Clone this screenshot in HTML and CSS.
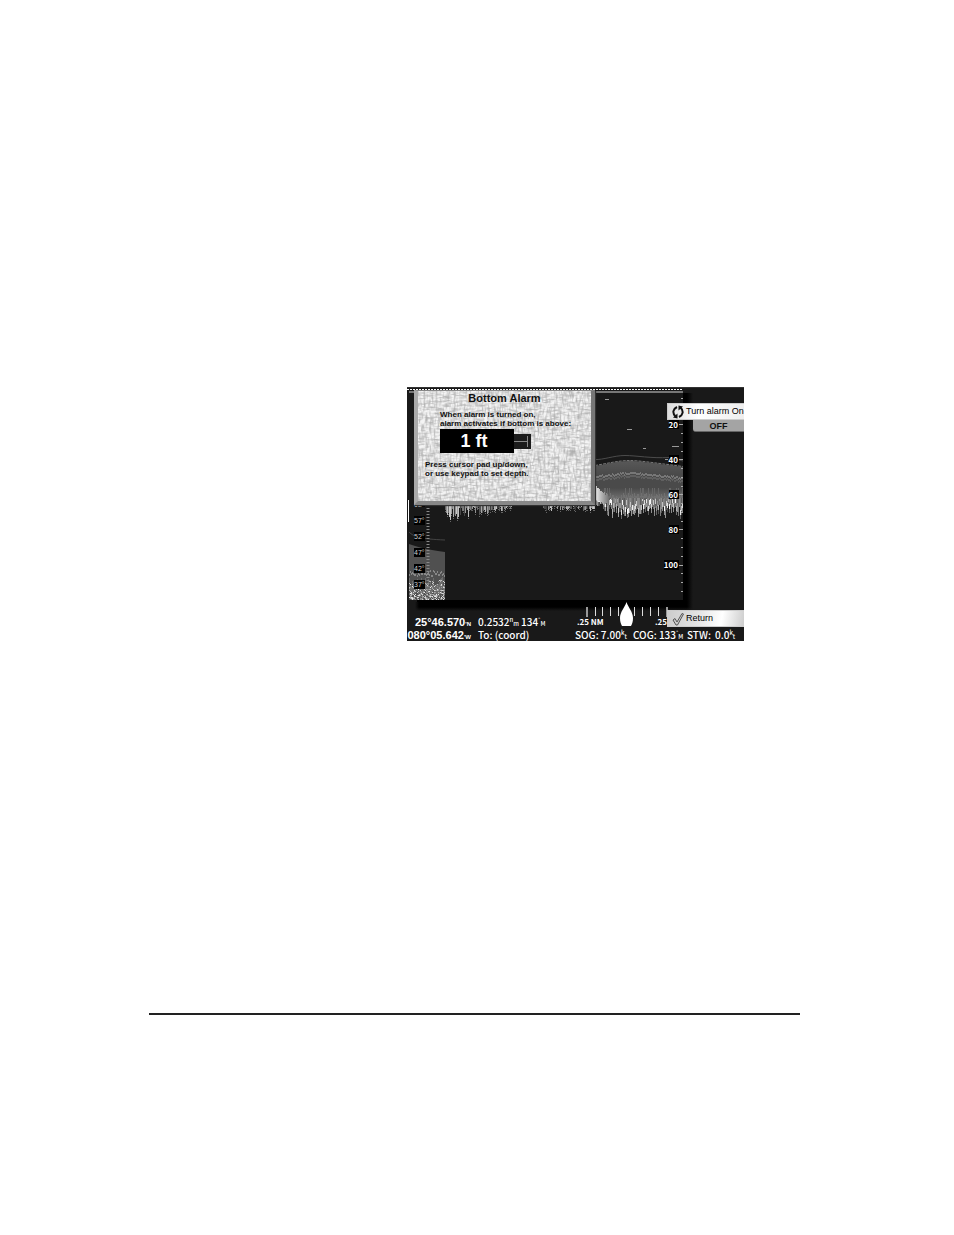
FILE: index.html
```
<!DOCTYPE html>
<html lang="en">
<head>
  <meta charset="UTF-8">
  <title>Bottom Alarm</title>
  <link rel="stylesheet" href="styles.css">
</head>
<body>

  <main class="page">
    <section class="device">
      <div class="screen">
        <svg class="sonar" viewBox="0 0 337 215" aria-hidden="true">
          <defs>
            <linearGradient id="edge" x1="0" x2="1" y1="0" y2="0">
              <stop offset="0" stop-color="#000"/>
              <stop offset="0.4" stop-color="#000"/>
              <stop offset="1" stop-color="#191919"/>
            </linearGradient>
            <linearGradient id="echo" x1="0" x2="0" y1="0" y2="1">
              <stop offset="0" stop-color="#585858"/>
              <stop offset="0.3" stop-color="#4a4a4a"/>
              <stop offset="0.6" stop-color="#4a4a4a"/>
              <stop offset="1" stop-color="#888"/>
            </linearGradient>
          </defs>
          <rect width="337" height="215" fill="#191919"/>
          <rect x="276" y="6" width="10" height="209" fill="url(#edge)"/>
          <rect x="10" y="213" width="270" height="2" fill="#000"/>
          <path d="M0 .5H337" stroke="#333"/>
          <path d="M0 2.5H276" stroke="#fff" stroke-width="1" stroke-dasharray="2 1"/>
          <path d="M2 5H276" stroke="#777" stroke-width="2"/>
          <path d="M1.5 113V135" stroke="#fff"/>

          <!-- right hand echo -->
          <path d="M188 79C200 77 212 74 222 74S245 76 276 80V119H188Z" fill="url(#echo)"/>
          <path d="M188 78.5C200 76.500 212 73.500 222 73.500S245 75.500 276 79.500" fill="none" stroke="#777" stroke-dasharray="3 1"/>
          <path d="M188 72.500C196 73 207 68.500 218 68.500S244 71.500 262 70.500L276 74" fill="none" stroke="#4c4c4c"/>
          <path d="M198 12.500H202M220 42.500H225M236 61.500H239M265 59.500H272M258 72.500H261" stroke="#999"/>

          <!-- left hand zoom strip -->
          <path d="M2 157C10 160 18 162 38 165V213H2Z" fill="#505050"/>
          <path d="M2 145C7 150 14 152 38 153" fill="none" stroke="#444"/>
          <g id="noise"></g>

          <!-- temperature scale -->
          <path d="M21 118V213" stroke="#888" stroke-width="3" stroke-dasharray="1 2"/>
          <g class="scale-box">
            <rect x="7" y="116" width="11" height="4"/>
            <rect x="7" y="129" width="11" height="9"/>
            <rect x="7" y="145" width="11" height="9"/>
            <rect x="7" y="161" width="11" height="9"/>
            <rect x="7" y="177" width="11" height="9"/>
            <rect x="7" y="193" width="11" height="9"/>
          </g>
          <g class="temp">
            <text x="7" y="120">62°</text>
            <text x="7" y="136">57°</text>
            <text x="7" y="152">52°</text>
            <text x="7" y="168">47°</text>
            <text x="7" y="184">42°</text>
            <text x="7" y="200">37°</text>
          </g>

          <!-- depth scale -->
          <path d="M274 11.500H276M274 20.500H276M272 37.500H276M274 46.500H276M274 55.500H276M274 64.500H276M272 72.500H276M274 81.500H276M274 90.500H276M274 99.500H276M272 107.500H276M274 116.500H276M274 125.500H276M274 134.500H276M272 142.500H276M274 151.500H276M274 160.500H276M274 169.500H276M272 178.500H276M274 186.500H276M274 195.500H276M274 204.500H276" stroke="#aaa"/>
          <g class="scale-box">
            <rect x="262" y="33" width="10" height="9"/>
            <rect x="262" y="68" width="10" height="9"/>
            <rect x="262" y="103" width="10" height="9"/>
            <rect x="262" y="138" width="10" height="9"/>
            <rect x="257" y="173" width="15" height="10"/>
          </g>
          <g class="depth">
            <text x="271" y="41">20</text>
            <text x="271" y="76">40</text>
            <text x="271" y="111">60</text>
            <text x="271" y="146">80</text>
            <text x="271" y="181">100</text>
          </g>
        </svg>

        <form class="dialog">
          <svg class="linen" width="100%" height="100%" aria-hidden="true">
            <filter id="weave-v" x="0" y="0" width="100%" height="100%">
              <feTurbulence type="fractalNoise" baseFrequency="0.5 0.12" numOctaves="2" seed="4"/>
              <feColorMatrix values="0 0 0 0 0.4  0 0 0 0 0.4  0 0 0 0 0.4  1.900 0 0 0 -0.780"/>
            </filter>
            <filter id="weave-h" x="0" y="0" width="100%" height="100%">
              <feTurbulence type="fractalNoise" baseFrequency="0.12 0.5" numOctaves="2" seed="9"/>
              <feColorMatrix values="0 0 0 0 0.4  0 0 0 0 0.4  0 0 0 0 0.4  1.900 0 0 0 -0.780"/>
            </filter>
            <rect width="100%" height="100%" filter="url(#weave-v)"/>
            <rect width="100%" height="100%" filter="url(#weave-h)"/>
          </svg>
          <h1>Bottom Alarm</h1>
          <label class="intro" for="depth">When alarm is turned on,<br>alarm activates if bottom is above:</label>
          <div class="depth-row">
            <input id="depth" type="text" value="1 ft">
            <svg class="cursor" viewBox="0 0 17 15" aria-hidden="true">
              <rect width="17" height="15" fill="#1c1c1c"/>
              <path d="M0 7.500H13M13.500 2V13" stroke="#888" fill="none"/>
            </svg>
          </div>
          <p class="hint">Press cursor pad up/down,<br>or use keypad to set depth.</p>
        </form>
      </div>

      <footer class="status">
        <div class="row">
          <strong class="coord">25°46.570<small>'N</small></strong>
          <span class="dist">0.2532<sup>n</sup><sub>m</sub></span>
          <span class="bearing">134<sup>°</sup><sub>M</sub></span>
          <svg class="xte" viewBox="0 0 94 25" aria-hidden="true">
            <path d="M10 5V15M90 5V15" stroke="#999" stroke-width="2"/>
            <path d="M18.500 5V14M25.500 5V14M33.500 5V14M41.500 5V14M57.500 5V14M65.500 5V14M73.500 5V14M81.500 5V14" stroke="#ddd"/>
            <path d="M49.500 0C48 5 43 10 43 16C43 20 44 22 45 24H54C55 22 56 20 56 16C56 10 51 5 49.500 0Z" fill="#fff"/>
            <text x="0" y="23">.25 NM</text>
            <text x="78" y="23">.25</text>
          </svg>
        </div>
        <div class="row">
          <strong class="coord">080°05.642<small>'W</small></strong>
          <span class="to">To: (coord)</span>
          <span class="sog">SOG: 7.00<sup>k</sup><sub>t</sub></span>
          <span class="cog">COG: 133<sup>°</sup><sub>M</sub></span>
          <span class="stw">STW:</span>
          <span>0.0<sup>k</sup><sub>t</sub></span>
        </div>
      </footer>

      <div class="softkeys">
        <button type="button" class="key">
          <svg viewBox="0 0 12 14" aria-hidden="true">
            <path d="M5 2C1 4 0 8 3.500 11.500M7 12C11 10 12 6 8.500 2.500" fill="none" stroke="#111" stroke-width="2"/>
            <path d="M5.500 13.500V8.500L1 12.500ZM6.500 .5V5.500L11 1.500Z" fill="#111"/>
          </svg>
          <span>Turn alarm On</span>
        </button>
        <div class="state">OFF</div>
        <button type="button" class="key return">
          <svg viewBox="0 0 12 14" aria-hidden="true">
            <path d="M1 8L3 6.500L5 10L10 1.500L11.500 2L5.500 13H4Z" fill="#ccc" stroke="#555" stroke-width="1"/>
          </svg>
          <span>Return</span>
        </button>
      </div>
    </section>

    <hr>
  </main>

  <script src="script.js"></script>
</body>
</html>
```

FILE: styles.css
```
* {
  box-sizing: border-box;
}

body {
  margin: 0;
  background: #fff;
  color: #111;
  font-family: "Liberation Sans", Arial, sans-serif;
}

.page {
  padding: 387px 154px 220px 149px;
}

hr {
  height: 2px;
  margin: 372px 0 0;
  border: none;
  background: #222;
}

/* chartplotter */
.device {
  position: relative;
  max-width: 337px;
  margin-left: 258px;
  background: #191919;
  overflow: hidden;
}

.screen {
  position: relative;
}

.sonar {
  display: block;
  width: 100%;
}

.scale-box {
  fill: #000;
}

.temp {
  fill: #ccc;
  font-size: 7px;
}

.depth {
  fill: #fff;
  font-family: "Noto Sans CJK SC", sans-serif;
  font-size: 8px;
  font-weight: bold;
  text-anchor: end;
}

/* alarm dialog */
.dialog {
  position: absolute;
  top: 3px;
  left: 7px;
  width: 181px;
  height: 115px;
  padding: 1px 0 0;
  background: #f4f4f4;
  border: solid;
  border-width: 1px 4px 4px 4px;
  border-color: #888 #777 #888 #aaa;
  box-shadow: 1px 1px 1px #333;
}

.linen {
  position: absolute;
  inset: 0;
}

.dialog h1,
.dialog label,
.dialog p,
.depth-row {
  position: relative;
}

.dialog h1 {
  margin: 0 0 6px;
  font-size: 11px;
  line-height: 12px;
  text-align: center;
}

.intro,
.hint {
  display: block;
  font-size: 8px;
  font-weight: bold;
  line-height: 9px;
  white-space: nowrap;
}

.intro {
  margin-left: 22px;
}

.depth-row {
  display: flex;
  align-items: center;
  margin: 1px 0 0 22px;
}

.depth-row input {
  width: 74px;
  height: 24px;
  padding: 0 6px 0 0;
  border: 0;
  background: #000;
  color: #fff;
  font: bold 18px "Liberation Sans", Arial, sans-serif;
  text-align: center;
}

.cursor {
  width: 17px;
  height: 15px;
}

.hint {
  margin: 7px 0 0 7px;
}

/* soft keys down the right side */
.softkeys {
  position: absolute;
  top: 16px;
  right: 0;
  bottom: 14px;
  width: 77px;
  display: flex;
  flex-direction: column;
}

.key {
  display: flex;
  align-items: center;
  gap: 2px;
  height: 17px;
  padding: 0 0 0 4px;
  border: 1px solid #ccc;
  border-width: 1px 0 1px 1px;
  background: linear-gradient(90deg, #ddd, #fff 40%, #eee);
  color: #000;
  font: 9px/15px "Liberation Sans", Arial, sans-serif;
  white-space: nowrap;
}

.key svg {
  flex: none;
  width: 12px;
  height: 14px;
}

.return {
  margin-top: auto;
  background: linear-gradient(100deg, #ccc, #e4e4e4 40%, #fff 70%, #ccc);
}

.state {
  height: 12px;
  margin-left: 26px;
  border-bottom: 1px solid #666;
  border-radius: 0 0 0 3px;
  background: #a4a4a4;
  font-size: 9px;
  font-weight: bold;
  line-height: 12px;
  text-align: center;
}

/* status bar */
.status {
  color: #fff;
  font-family: "Noto Sans CJK SC", sans-serif;
  font-size: 10px;
  font-weight: 500;
  background: linear-gradient(90deg, #191919 8px, transparent 12px 280px, #191919 286px), linear-gradient(#000 5px, #191919 9px);
}

.row {
  display: flex;
  align-items: flex-end;
  height: 26px;
  line-height: 12px;
  white-space: nowrap;
}

.row + .row {
  height: 13px;
}

.row > * {
  flex: none;
}

.coord {
  width: 64px;
  font-family: "Liberation Sans", Arial, sans-serif;
  font-size: 11px;
  text-align: right;
}

.row small,
.row sup,
.row sub {
  font-size: 6px;
  line-height: 1px;
}

.row sup {
  vertical-align: 4px;
}

.row sub {
  vertical-align: 0;
}

.dist {
  width: 43px;
  margin-left: 7px;
}

.bearing {
  width: 56px;
}

.xte {
  width: 94px;
  height: 25px;
  margin-bottom: 1px;
  fill: #fff;
  font-size: 8px;
  font-weight: bold;
}

.to {
  width: 97px;
  margin-left: 7px;
}

.sog {
  width: 58px;
}

.cog {
  width: 54px;
}

.stw {
  width: 28px;
}
```

FILE: script.js
```
// bottom echo and clutter, one vertical line per ping
const noise = document.getElementById('noise');
let seed = 7;

function rand() {
  seed = (seed * 16807) % 2147483647;
  return seed / 2147483647;
}

function line(x, top, height, color) {
  const r = document.createElementNS('http://www.w3.org/2000/svg', 'rect');
  r.setAttribute('x', x);
  r.setAttribute('y', Math.round(top));
  r.setAttribute('width', 1);
  r.setAttribute('height', Math.max(1, Math.round(height)));
  r.setAttribute('fill', color);
  noise.appendChild(r);
}

const grey = v => `rgb(${v},${v},${v})`;

// right hand echo
let drift = 0;
for (let x = 188; x < 276; x++) {
  const band = 84 + Math.abs(x - 225) / 10 + rand() * 2;
  line(x, band, 2, '#777');
  line(x, band + 3, 2, '#606060');
  drift = (drift + rand() * 12) % 12;
  const end = x < 196 ? 115 + rand() * 4 : 117 + drift + rand() * 4;
  line(x, 112, 8, '#191919');
  line(x, 106 + rand() * 5, 4, '#707070');
  line(x, 111, end - 114, grey(90 + Math.floor(rand() * 50)));
  line(x, Math.max(112, end - 9), 5, grey(130 + Math.floor(rand() * 120)));
  line(x, end - 4, 4, grey(70 + Math.floor(rand() * 90)));
  if (rand() > 0.75) line(x, 101, 8, '#666');
  if (x < 202) {
    line(x, 98 + (x - 188) * 0.7 + rand() * 3, 14 - (x - 188) / 2, grey(235 - (x - 188) * 9));
  }
}

// clutter showing below the dialog
for (let x = 38; x < 188; x++) {
  const near = x < 105;
  if (!near && x < 136) continue;
  const len = near ? 2 + rand() * (14 - (x - 38) * 0.16) : rand() * 6;
  line(x, 118, len, grey(60 + Math.floor(rand() * 150)));
  if (rand() > 0.5) line(x, 119 + len, 1, '#666');
}

// left hand zoom strip
for (let x = 2; x < 38; x++) {
  line(x, 183 + rand() * 5, 2, '#888');
  line(x, 190 + rand() * 10, 12, '#6c6c6c');
  for (let y = 193; y < 213; y++) {
    if (rand() < (y - 190) / 30) line(x, y, 1, grey(110 + Math.floor(rand() * 130)));
  }
}
```
